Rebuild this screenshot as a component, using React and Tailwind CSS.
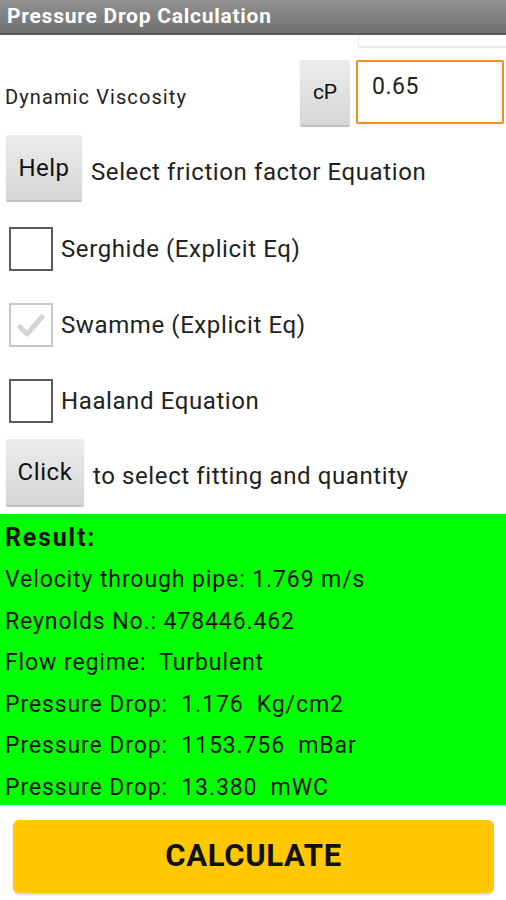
import { useState } from 'react'

function GrayButton({ children, className = '' }) {
  return (
    <button
      className={`flex items-center justify-center rounded-[2px] bg-gradient-to-b from-[#ececec] to-[#d6d6d6] text-[#111] shadow-[0_2px_1px_rgba(0,0,0,0.25)] ${className}`}
    >
      {children}
    </button>
  )
}

function Check({ label, checked, className = '' }) {
  return (
    <div className={`flex items-center ${className}`}>
      <div
        className={`ml-[9px] flex h-[44px] w-[44px] items-center justify-center border-2 bg-white ${
          checked ? 'border-[#c8c8c8]' : 'border-[#5a5a5a]'
        }`}
      >
        {checked && (
          <svg width="30" height="26" viewBox="0 0 30 26">
            <path d="M4 15 L11 22 L26 5" fill="none" stroke="#d4d4d4" strokeWidth="5" strokeLinecap="round" strokeLinejoin="round" />
          </svg>
        )}
      </div>
      <span className="ml-[8px] text-[24px] tracking-[0.6px] text-[#222]">{label}</span>
    </div>
  )
}

export default function App() {
  const [visc, setVisc] = useState('0.65')
  const results = [
    'Velocity through pipe: 1.769 m/s',
    'Reynolds No.: 478446.462',
    'Flow regime:  Turbulent',
    'Pressure Drop:  1.176  Kg/cm2',
    'Pressure Drop:  1153.756  mBar',
    'Pressure Drop:  13.380  mWC',
  ]

  return (
    <div className="h-[900px] w-[506px] overflow-hidden bg-white font-['Roboto',sans-serif]">
      {/* Title bar */}
      <div className="flex h-[35px] items-center border-b-2 border-[#5a5a5a] bg-gradient-to-b from-[#919191] to-[#717171] px-[7px]">
        <h1 className="text-[21px] font-bold tracking-[0.75px] text-white">Pressure Drop Calculation</h1>
      </div>

      {/* leftover field above */}
      <div className="flex h-[13px]">
        <div className="ml-auto w-[148px] border-b-2 border-l border-[#ececec]" />
      </div>

      {/* Viscosity row */}
      <div className="mt-[12px] flex h-[65px]">
        <span className="ml-[5px] mt-[22px] text-[20px] tracking-[1.1px] text-[#222]">Dynamic Viscosity</span>
        <GrayButton className="ml-auto h-[65px] w-[50px] text-[21px]">cP</GrayButton>
        <input
          value={visc}
          onChange={(e) => setVisc(e.target.value)}
          className="ml-[6px] mr-[2px] h-[64px] w-[148px] rounded-[2px] border-2 border-[#f28c1c] bg-white pb-[12px] pl-[14px] text-[23px] tracking-[0.5px] text-[#222] outline-none"
        />
      </div>

      {/* Help row */}
      <div className="mt-[10px] flex h-[65px] items-center">
        <GrayButton className="ml-[6px] h-[65px] w-[76px] text-[24px] tracking-[0.5px]">Help</GrayButton>
        <span className="ml-[9px] mt-[8px] text-[24px] tracking-[0.6px] text-[#222]">Select friction factor Equation</span>
      </div>

      <Check className="mt-[27px]" label="Serghide (Explicit Eq)" />
      <Check className="mt-[32px]" label="Swamme (Explicit Eq)" checked />
      <Check className="mt-[32px]" label="Haaland Equation" />

      {/* Click row */}
      <div className="mt-[16px] flex h-[66px] items-center">
        <GrayButton className="ml-[6px] h-[66px] w-[78px] text-[24px] tracking-[0.6px]">Click</GrayButton>
        <span className="ml-[9px] mt-[8px] text-[24px] tracking-[0.6px] text-[#222]">to select fitting and quantity</span>
      </div>

      {/* Result */}
      <div className="mt-[9px] h-[291px] bg-[#00ff00] px-[5px] pt-[3px] text-[#111]">
        <div className="h-[42px] text-[25px] font-bold leading-[41px] tracking-[1.8px]">Result:</div>
        {results.map((r) => (
          <div key={r} className="h-[41.5px] whitespace-pre text-[23px] leading-[41.5px] tracking-[0.9px]">
            {r}
          </div>
        ))}
      </div>

      {/* Calculate */}
      <div className="px-[13px] pt-[15px]">
        <button className="flex h-[73px] w-[481px] items-center justify-center rounded-[6px] bg-[#ffc800] shadow-[0_2px_2px_rgba(0,0,0,0.15)]">
          <span className="text-[31px] font-bold tracking-[0.7px] text-[#111]">CALCULATE</span>
        </button>
      </div>
    </div>
  )
}
